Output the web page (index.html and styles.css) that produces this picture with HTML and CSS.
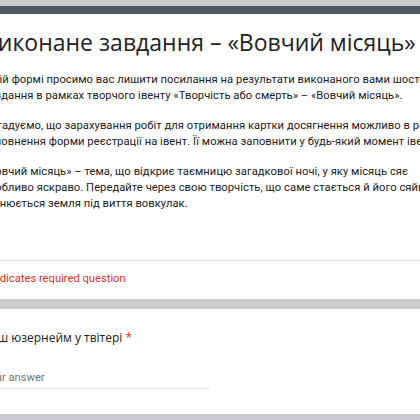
FILE: index.html
```html
<!DOCTYPE html>
<html lang="uk">
<head>
    <meta charset="UTF-8">
    <meta name="viewport" content="width=device-width, initial-scale=1.0">
    <title>Виконане завдання – «Вовчий місяць»</title>
    <link rel="stylesheet" href="styles.css">
</head>
<body>
<div class="form">
    <div class="card header">
        <div class="header_main">
            <h1 class="title">Виконане завдання – «Вовчий місяць»</h1>
            <div class="desc">
                <p>У цій формі просимо вас лишити посилання на результати виконаного вами шостого<br>завдання в рамках творчого івенту «Творчість або смерть» – «Вовчий місяць».</p>
                <p>Нагадуємо, що зарахування робіт для отримання картки досягнення можливо в разі<br>заповнення форми реєстрації на івент. Її можна заповнити у будь-який момент івенту.</p>
                <p>«Вовчий місяць» – тема, що відкриє таємницю загадкової ночі, у яку місяць сяє<br>особливо яскраво. Передайте через свою творчість, що саме стається й його сяйві, як<br>змінюється земля під виття вовкулак.</p>
            </div>
        </div>
        <div class="required">* Indicates required question</div>
    </div>

    <div class="card question">
        <div class="q_title">Ваш юзернейм у твітері <span class="star">*</span></div>
        <div class="answer">Your answer</div>
    </div>
</div>
</body>
</html>
```

FILE: styles.css
```css
body { margin: 0; background-color: #cacbcf; overflow: hidden; font-family: Roboto, Arial, sans-serif; color: #202124; }

.form {
    margin-left: -36px;
    width: 520px;
    padding-top: 6px;
}

.card {
    background-color: #fff;
    margin-bottom: 10px;
}

.header { border-top: 8px solid #4b5a64; }

.header_main { padding: 12px 19px 48px 19px; }

.title {
    margin: 0;
    font-family: "Open Sans", sans-serif;
    font-weight: 400;
    font-size: 23px;
    line-height: 32px;
    white-space: nowrap;
}

.desc {
    margin-top: 14px;
    font-size: 11.2px;
    line-height: 16px;
    letter-spacing: 0.05px;
    white-space: nowrap;
}
.desc p { margin: 0 0 14px 0; }
.desc p:last-child { margin-bottom: 0; }

.required {
    border-top: 1px solid #dadce0;
    padding: 10px 19px 12px 19px;
    font-size: 11.2px;
    line-height: 16px;
    color: #d93025;
}

.question { padding: 19px 19px 25px 19px; }

.q_title {
    font-family: "Open Sans", sans-serif;
    font-size: 12px;
    line-height: 19px;
}
.star { color: #d93025; }

.answer {
    margin-top: 23px;
    width: 227px;
    padding-bottom: 2px;
    border-bottom: 1px solid #e0e0e0;
    font-size: 11.2px;
    line-height: 16px;
    color: #70757a;
}
```
